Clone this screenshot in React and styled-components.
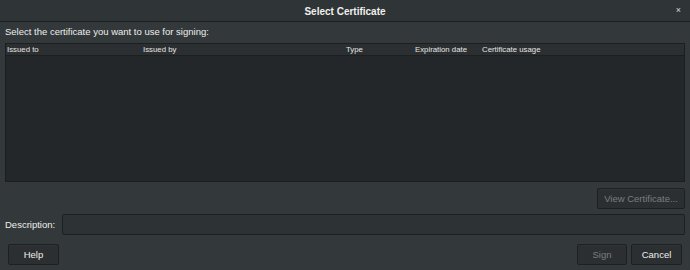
import React from "react";
import styled, { createGlobalStyle } from "styled-components";

const Global = createGlobalStyle`
  html, body { margin: 0; padding: 0; background: #33393b; }
  body { font-family: "Liberation Sans", "DejaVu Sans", sans-serif; color: #eeeeec; }
`;

const Window = styled.div`
  width: 690px;
  height: 270px;
  display: flex;
  flex-direction: column;
  background: #33393b;
  overflow: hidden;
`;

const TitleBar = styled.div`
  height: 21px;
  display: grid;
  grid-template-columns: 1fr auto 1fr;
  align-items: center;
  background: #2f3436;
  border-bottom: 1px solid #1c1f20;
`;

const Title = styled.div`
  grid-column: 2;
  font-size: 10px;
  font-weight: bold;
  color: #f0f0ee;
  padding-top: 1px;
`;

const Close = styled.div`
  justify-self: end;
  margin-right: 9px;
  font-size: 9px;
  color: #d8d8d8;
  line-height: 1;
`;

const Body = styled.div`
  flex: 1;
  display: flex;
  flex-direction: column;
  padding: 0 5px;
`;

const Prompt = styled.div`
  font-size: 9.5px;
  margin-top: 3px;
  height: 14px;
  line-height: 14px;
`;

const Table = styled.div`
  margin-top: 4px;
  height: 137px;
  border: 1px solid #1c1f20;
  background: #232729;
  display: flex;
  flex-direction: column;
`;

const HeaderRow = styled.div`
  display: grid;
  grid-template-columns: 136px 203px 69px 67px 1fr;
  height: 11px;
  background: #2b2f31;
  border-bottom: 1px solid #1c1f20;
`;

const HeaderCell = styled.div`
  font-size: 7.8px;
  line-height: 12px;
  padding-left: 1px;
  color: #e6e6e4;
  white-space: nowrap;
`;

const Button = styled.button`
  font-family: inherit;
  font-size: 9.5px;
  height: 21px;
  width: ${(p) => p.$w || 50}px;
  padding: 0;
  background: #2b2f31;
  border: 1px solid #1d2021;
  border-radius: 2px;
  color: ${(p) => (p.disabled ? "#7a7e7f" : "#eeeeec")};
  box-shadow: inset 0 1px 0 rgba(255,255,255,0.02);
`;

const ViewRow = styled.div`
  display: flex;
  justify-content: flex-end;
  margin-top: 6px;
`;

const DescRow = styled.div`
  display: flex;
  align-items: center;
  gap: 7px;
  margin-top: 5px;
`;

const DescLabel = styled.div`
  font-size: 9.5px;
`;

const Input = styled.div`
  flex: 1;
  height: 19px;
  background: #2d3234;
  border: 1px solid #1d2021;
  border-radius: 2px;
`;

const Footer = styled.div`
  display: flex;
  align-items: center;
  gap: 4px;
  margin-top: 9px;
  padding: 0 3px;
`;

const Spacer = styled.div`
  flex: 1;
`;

export default function App() {
  return (
    <>
      <Global />
      <Window>
        <TitleBar>
          <Title>Select Certificate</Title>
          <Close>×</Close>
        </TitleBar>
        <Body>
          <Prompt>Select the certificate you want to use for signing:</Prompt>
          <Table>
            <HeaderRow>
              <HeaderCell>Issued to</HeaderCell>
              <HeaderCell>Issued by</HeaderCell>
              <HeaderCell>Type</HeaderCell>
              <HeaderCell>Expiration date</HeaderCell>
              <HeaderCell>Certificate usage</HeaderCell>
            </HeaderRow>
          </Table>
          <ViewRow>
            <Button $w={88} disabled>View Certificate...</Button>
          </ViewRow>
          <DescRow>
            <DescLabel>Description:</DescLabel>
            <Input />
          </DescRow>
          <Footer>
            <Button $w={51}>Help</Button>
            <Spacer />
            <Button $w={50} disabled>Sign</Button>
            <Button $w={51}>Cancel</Button>
          </Footer>
        </Body>
      </Window>
    </>
  );
}
